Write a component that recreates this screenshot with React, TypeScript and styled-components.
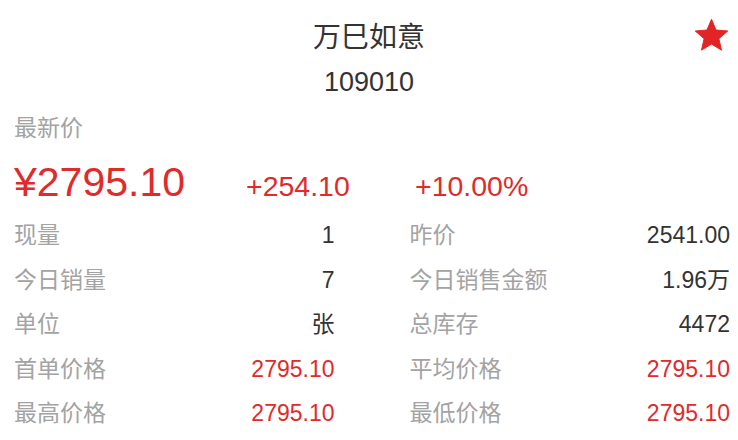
import React from 'react'
import styled, { createGlobalStyle } from 'styled-components'

const GlobalStyle = createGlobalStyle`
  html, body {
    margin: 0;
    padding: 0;
    background: #ffffff;
  }
  body {
    font-family: "Liberation Sans", "Noto Sans CJK SC", Arial, sans-serif;
  }
`

interface Stat {
  label: string
  value: string
  red?: boolean
}

const leftStats: Stat[] = [
  { label: '现量', value: '1' },
  { label: '今日销量', value: '7' },
  { label: '单位', value: '张' },
  { label: '首单价格', value: '2795.10', red: true },
  { label: '最高价格', value: '2795.10', red: true },
]

const rightStats: Stat[] = [
  { label: '昨价', value: '2541.00' },
  { label: '今日销售金额', value: '1.96万' },
  { label: '总库存', value: '4472' },
  { label: '平均价格', value: '2795.10', red: true },
  { label: '最低价格', value: '2795.10', red: true },
]

function App() {
  const rows = leftStats.flatMap((s, i) => [s, rightStats[i]])

  return (
    <Page>
      <GlobalStyle />
      <Header>
        <Title>万巳如意</Title>
        <Code>109010</Code>
        <StarButton aria-label="收藏">
          <svg width="39" height="39" viewBox="0 0 24 24">
            <path
              d="M12 17.27L18.18 21l-1.64-7.03L22 9.24l-7.19-.61L12 2 9.19 8.63 2 9.24l5.46 4.73L5.82 21z"
              fill="#e32424"
              stroke="#e32424"
              strokeWidth="0.6"
              strokeLinejoin="round"
            />
          </svg>
        </StarButton>
      </Header>

      <PriceLabel>最新价</PriceLabel>
      <PriceRow>
        <Price>¥2795.10</Price>
        <Change $width={169}>+254.10</Change>
        <Change>+10.00%</Change>
      </PriceRow>

      <StatGrid>
        {rows.map((s, i) => (
          <StatRow key={i}>
            <StatLabel>{s.label}</StatLabel>
            <StatValue $red={s.red}>{s.value}</StatValue>
          </StatRow>
        ))}
      </StatGrid>
    </Page>
  )
}

const Page = styled.div`
  width: 738px;
  height: 440px;
  box-sizing: border-box;
  padding: 18px 8px 0 14px;
  display: flex;
  flex-direction: column;
  overflow: hidden;
  background: #ffffff;
`

const Header = styled.div`
  position: relative;
  display: flex;
  flex-direction: column;
  align-items: center;
  margin-right: -8px;
  margin-left: -14px;
`

const Title = styled.div`
  font-size: 28px;
  line-height: 40px;
  color: #333333;
`

const Code = styled.div`
  margin-top: 2px;
  font-size: 27px;
  line-height: 44px;
  color: #333333;
`

const StarButton = styled.div`
  position: absolute;
  top: -2px;
  right: 7px;
  width: 39px;
  height: 39px;

  svg {
    display: block;
  }
`

const PriceLabel = styled.div`
  margin-top: 8px;
  font-size: 23px;
  line-height: 32px;
  color: #a3a3a3;
`

const PriceRow = styled.div`
  margin-top: 14px;
  height: 48px;
  display: flex;
  align-items: baseline;
  color: #e12a2a;
`

const Price = styled.div`
  width: 232px;
  font-size: 41px;
  line-height: 48px;
`

const Change = styled.div<{ $width?: number }>`
  width: ${(p) => (p.$width ? `${p.$width}px` : 'auto')};
  font-size: 28.5px;
  line-height: 48px;
`

const StatGrid = styled.div`
  margin-top: 7px;
  display: grid;
  grid-template-columns: 1fr 1fr;
  column-gap: 75px;
  grid-auto-rows: 44.5px;
`

const StatRow = styled.div`
  display: flex;
  align-items: baseline;
  justify-content: space-between;
  line-height: 44.5px;
`

const StatLabel = styled.span`
  font-size: 23px;
  color: #a3a3a3;
`

const StatValue = styled.span<{ $red?: boolean }>`
  font-size: 23px;
  color: ${(p) => (p.$red ? '#e12a2a' : '#333333')};
`

export default App
